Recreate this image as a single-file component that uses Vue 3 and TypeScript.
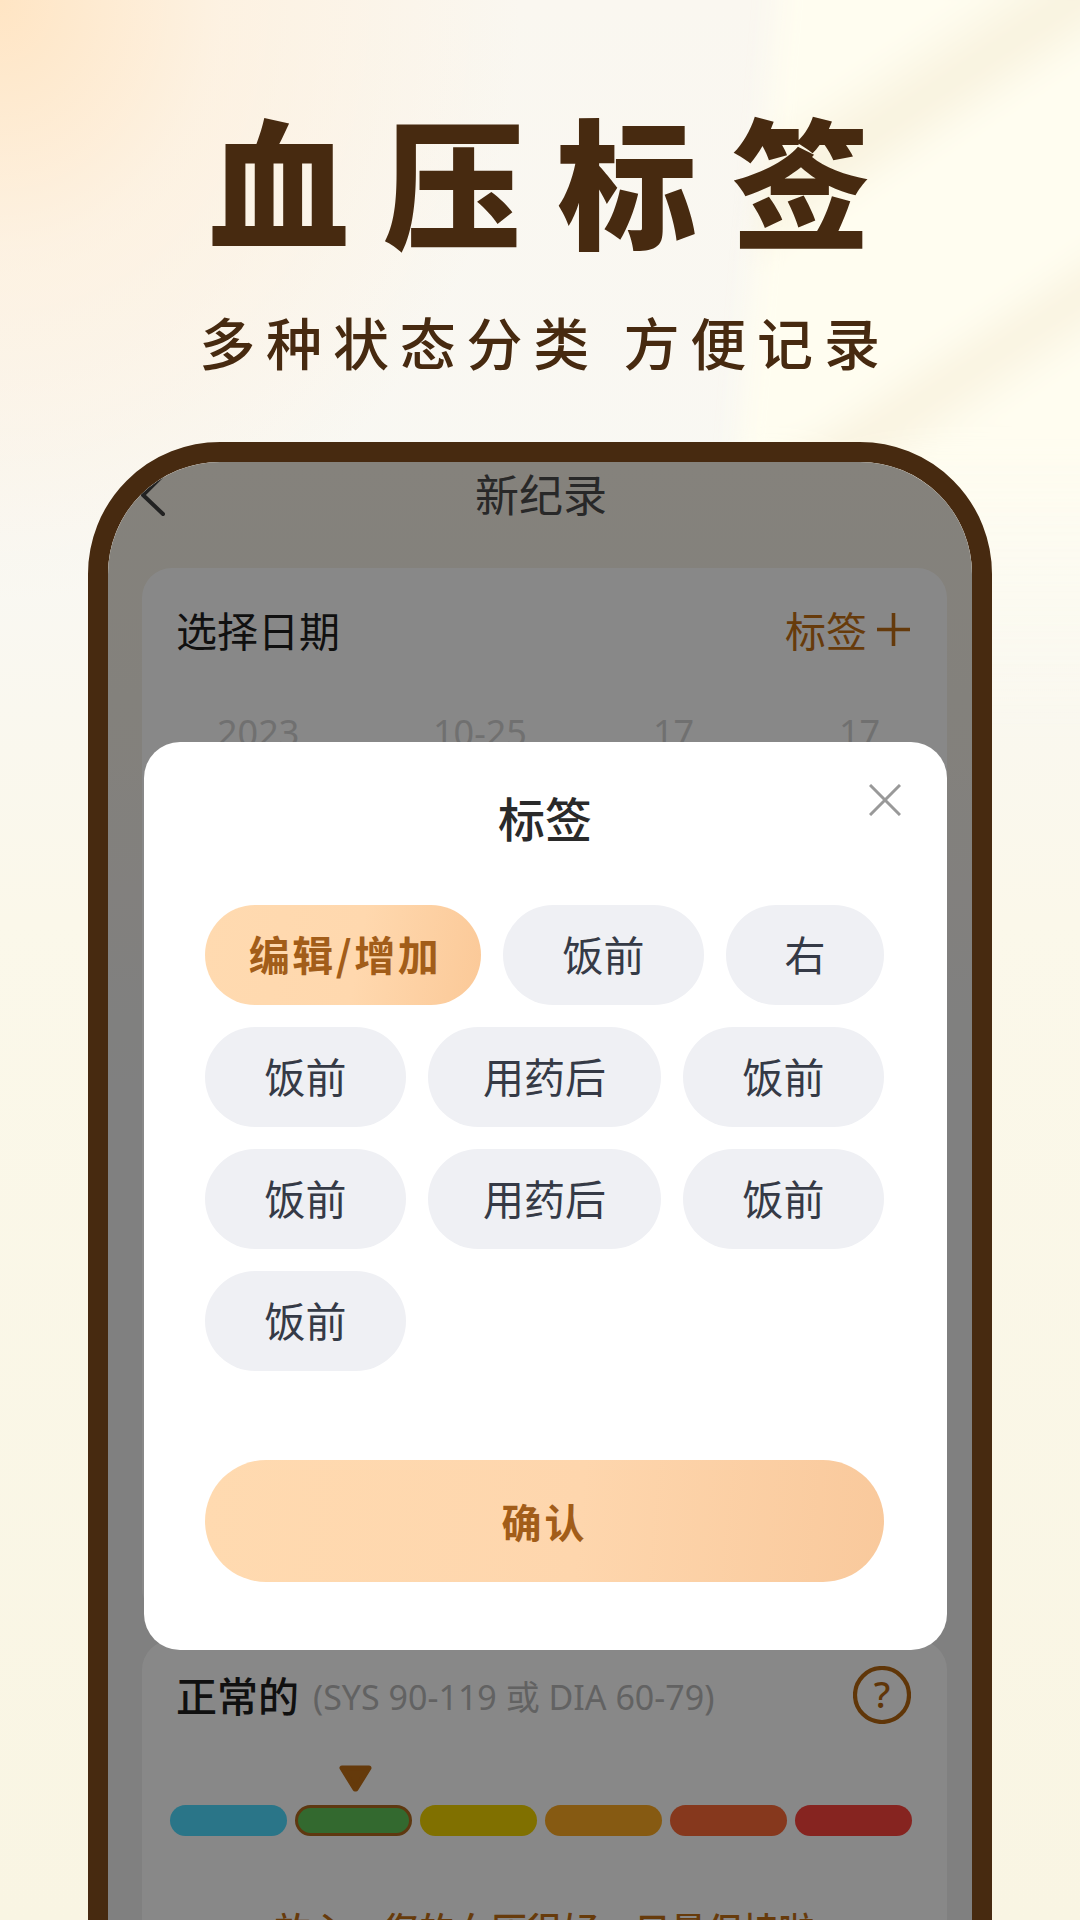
<script setup lang="ts">
const rows: { label: string; on?: boolean }[] = [
  { label: '编辑/增加', on: true },
  { label: '饭前' },
  { label: '右' },
  { label: '饭前' },
  { label: '用药后' },
  { label: '饭前' },
  { label: '饭前' },
  { label: '用药后' },
  { label: '饭前' },
  { label: '饭前' },
]
const segs = ['#4fdbff', '#60c558', '#f0d200', '#fca922', '#fc6a38', '#fc443c']
</script>

<template>
  <div class="page">
    <div class="panel"></div>
    <header class="head">
      <h1 class="title">血压标签</h1>
      <p class="sub">多种状态分类 方便记录</p>
    </header>
    <section class="phone">
      <div class="screen">
        <div class="nav">
          <svg class="back" viewBox="0 0 30 50" width="30" height="50"><path d="M25 5 5 25l20 19" fill="none" stroke="#404040" stroke-width="4" stroke-linecap="round" stroke-linejoin="round" /></svg>
          <span class="nav-title">新纪录</span>
        </div>
        <div class="card date-card">
          <div class="date-head">
            <span class="h">选择日期</span>
            <span class="tag-link">标签
              <svg viewBox="0 0 33 33" width="33" height="33"><path d="M0 16.5h33M16.5 0v33" fill="none" stroke="#bd6d15" stroke-width="3.6" stroke-linecap="round" /></svg>
            </span>
          </div>
          <div class="date-row"><span>2023</span><span>10-25</span><span>17</span><span>17</span></div>
        </div>
        <div class="card level-card">
          <div class="level-head">
            <span class="h strong">正常的</span>
            <span class="range">(SYS 90-119 或 DIA 60-79)</span>
            <svg class="help" viewBox="0 0 58 58" width="58" height="58">
              <circle cx="29" cy="29" r="27" fill="none" stroke="#b5660f" stroke-width="4.2" />
              <text x="29" y="42" text-anchor="middle" font-size="37" font-weight="500" fill="#b5660f" font-family="'Noto Sans'">?</text>
            </svg>
          </div>
          <svg class="marker" viewBox="0 0 33 27" width="33" height="27"><path d="M3 3h27L17 24h-1z" fill="#bd6d15" stroke="#bd6d15" stroke-width="5" stroke-linejoin="round" /></svg>
          <div class="segs">
            <span v-for="(c, i) in segs" :key="i" class="seg" :class="{ cur: i === 1 }" :style="{ background: c }"></span>
          </div>
          <p class="advice">放心，您的血压很好，只量保持啦</p>
        </div>
        <div class="scrim"></div>
      </div>
      <div class="modal">
        <svg class="close" viewBox="0 0 32 32" width="32" height="32"><path d="M1 1 31 31M31 1 1 31" fill="none" stroke="#999" stroke-width="3" /></svg>
        <h2 class="modal-title">标签</h2>
        <div class="chips">
          <span v-for="(r, i) in rows" :key="i" class="chip" :class="{ on: r.on, wide: r.label === '用药后', narrow: r.label === '右' }">{{ r.label }}</span>
        </div>
        <button class="ok">确认</button>
      </div>
    </section>
  </div>
</template>

<style>
html, body { margin: 0; padding: 0; }
</style>

<style scoped>
.page {
  position: relative;
  width: 1080px;
  height: 1920px;
  overflow: hidden;
  font-family: "Noto Sans", "Noto Sans CJK SC", sans-serif;
  background:
    radial-gradient(ellipse 520px 600px at 0 0, #ffe5c4 0%, rgba(255, 238, 216, .6) 42%, rgba(255, 255, 255, 0) 100%),
    linear-gradient(180deg, #faf7f0 0%, #f9f8f3 28%, #fbf8ea 48%, #f9f5e3 100%);
}
.panel {
  position: absolute;
  left: 780px;
  top: -30px;
  width: 420px;
  height: 760px;
  filter: blur(12px);
  transform: skewX(-5deg);
  transform-origin: top left;
  background:
    linear-gradient(145deg, rgba(248, 243, 224, 0) 130px, #f8f2de 195px, rgba(248, 243, 224, 0) 250px, rgba(248, 243, 224, 0) 410px, #f9f3e0 455px, rgba(248, 243, 224, 0) 510px),
    linear-gradient(180deg, #fffdf0 0%, #fffdf0 62%, rgba(255, 253, 240, 0) 100%);
}
.head { position: relative; text-align: center; }
.title {
  margin: 0;
  padding-top: 92px;
  font-family: "Noto Sans CJK SC", sans-serif;
  font-size: 140px;
  line-height: 170px;
  font-weight: 900;
  letter-spacing: 34px;
  text-indent: 34px;
  color: #472a10;
}
.sub {
  margin: 44px 0 0;
  font-family: "Noto Sans CJK SC", sans-serif;
  font-size: 56px;
  line-height: 70px;
  font-weight: 500;
  letter-spacing: 10.8px;
  text-indent: 10px;
  color: #472a10;
}
.phone {
  position: absolute;
  left: 88px;
  top: 442px;
  width: 904px;
  height: 1600px;
  box-sizing: border-box;
  border: 20px solid #472a10;
  border-radius: 132px 132px 0 0;
}
.screen {
  position: relative;
  height: 100%;
  overflow: hidden;
  border-radius: 112px 112px 0 0;
  background: linear-gradient(180deg, #f9f3e8 0%, #f6f2e8 15%, #f0f0f0 40%, #f0f0f0 100%);
  font-family: "Noto Sans CJK SC", sans-serif;
}
.nav {
  position: relative;
  height: 66px;
  display: flex;
  align-items: center;
  justify-content: center;
  font-size: 44px;
  color: #4c4c4c;
}
.nav-title { margin-bottom: 4px; margin-left: 2px; }
.back { position: absolute; left: 30px; top: 8px; }
.card { margin: 0 25px 0 34px; background: #fff; border-radius: 30px; padding: 0 34px; }
.date-card { margin-top: 40px; height: 1050px; box-sizing: border-box; }
.date-head { display: flex; justify-content: space-between; align-items: center; padding-top: 31px; }
.h { font-size: 41px; color: #1f1f1f; }
.h.strong { font-weight: 500; margin-bottom: 2px; }
.tag-link { display: flex; align-items: center; gap: 10px; font-size: 41px; color: #c27016; margin-right: 3px; }
.date-row {
  display: grid;
  grid-template-columns: 216px 220px 186px auto;
  margin-top: 49px;
  padding-left: 41px;
  font-family: "Noto Sans", sans-serif;
  font-size: 36px;
  color: #d2d2d2;
}
.level-card { margin-top: 22px; padding-top: 26px; padding-bottom: 40px; }
.level-head { display: flex; align-items: center; height: 58px; }
.range { margin-left: 14px; font-family: "Noto Sans", "Noto Sans CJK SC", sans-serif; font-size: 34px; color: #b8b8b8; }
.help { margin-left: auto; margin-right: 2px; }
.marker { display: block; margin: 41px 0 0 163px; }
.segs { display: flex; gap: 8px; margin: 13px 0 0 -6px; }
.seg { flex: 0 0 117px; height: 31px; border-radius: 16px; box-sizing: border-box; }
.seg.cur { border: 3px solid #b06a1e; }
.advice { margin: 66px 0 0 -34px; width: 805px; text-align: center; font-size: 36px; line-height: 52px; color: #c27016; font-weight: 500; }
.scrim { position: absolute; inset: 0; background: rgba(0, 0, 0, .467); }
.modal {
  position: absolute;
  left: 36px;
  top: 280px;
  width: 803px;
  height: 908px;
  box-sizing: border-box;
  background: #fff;
  border-radius: 36px;
  padding: 0 62px 0 61px;
  font-family: "Noto Sans CJK SC", sans-serif;
}
.close { position: absolute; right: 46px; top: 42px; }
.modal-title { margin: 0; padding-top: 42px; text-align: center; font-size: 47px; line-height: 66px; font-weight: 500; color: #2a2a2a; }
.chips { display: flex; flex-wrap: wrap; gap: 22px; margin-top: 55px; }
.chip {
  width: 201px;
  height: 100px;
  padding-bottom: 5px;
  box-sizing: border-box;
  border-radius: 50px;
  background: #eff0f4;
  color: #353a46;
  font-size: 41px;
  display: flex;
  align-items: center;
  justify-content: center;
}
.chip.wide { width: 233px; }
.chip.narrow { width: 158px; }
.chip.on {
  width: 276px;
  padding-left: 4px;
  background: linear-gradient(100deg, #ffdab0 0%, #ffd8ae 55%, #fbc998 100%);
  color: #a25d19;
  font-weight: 700;
  letter-spacing: 2.5px;
}
.ok {
  display: block;
  width: 679px;
  height: 122px;
  margin-top: 89px;
  border: 0;
  border-radius: 61px;
  background: linear-gradient(95deg, #ffdab0 0%, #fed6ad 55%, #f9c99c 100%);
  color: #a25d19;
  font-family: inherit;
  font-size: 40px;
  font-weight: 700;
  letter-spacing: 3px;
}
</style>
